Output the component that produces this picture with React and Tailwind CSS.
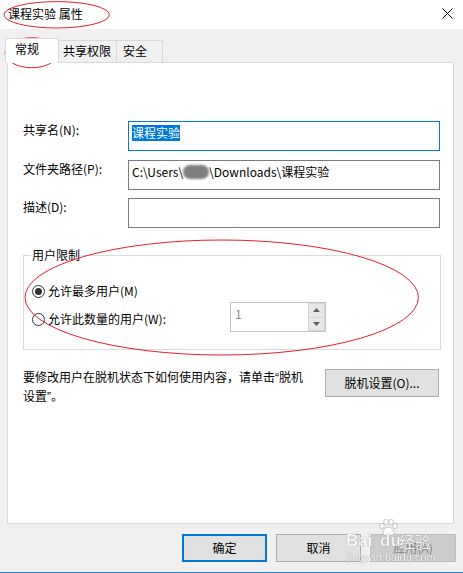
import React from 'react';

function Radio({ checked }) {
  return (
    <span className="w-[13px] h-[13px] rounded-full border border-[#333] bg-white flex items-center justify-center shrink-0">
      {checked && <span className="w-[7px] h-[7px] rounded-full bg-[#333]" />}
    </span>
  );
}

function Tri({ down }) {
  return (
    <svg width="7" height="4" viewBox="0 0 7 4">
      <path d={down ? 'M0 0H7L3.5 4Z' : 'M0 4H7L3.5 0Z'} fill="#606060" />
    </svg>
  );
}

export default function App() {
  return (
    <div className="relative w-[463px] h-[573px] overflow-hidden bg-[#f0f0f0] flex flex-col border-b border-[#1883d7] font-['Noto_Sans_CJK_SC',sans-serif] text-[12px] text-black">
      {/* title bar */}
      <div className="h-[29px] shrink-0 bg-white flex items-center justify-between pl-[8px] pr-[10px] pb-[2px]">
        <span className="leading-[16px]">课程实验 属性</span>
        <svg width="11" height="11" viewBox="0 0 11 11">
          <path d="M0.5 0.5L10.5 10.5M10.5 0.5L0.5 10.5" stroke="#111" strokeWidth="1" />
        </svg>
      </div>

      {/* tabs */}
      <div className="mt-[9px] h-[24px] pl-[5px] flex items-end">
        <div className="relative z-10 w-[54px] h-[25px] -mb-px bg-white border border-b-0 border-[#d9d9d9] pl-[9px] pt-[2px] leading-[16px]">
          常规
        </div>
        <div className="w-[58px] h-[22px] border-t border-r border-[#d9d9d9] pl-[4px] pt-[2px] leading-[16px]">
          共享权限
        </div>
        <div className="w-[46px] h-[22px] border-t border-r border-[#d9d9d9] pl-[6px] pt-[2px] leading-[16px]">
          安全
        </div>
      </div>

      {/* panel */}
      <div className="ml-[7px] w-[447px] h-[462px] bg-white border border-[#d9d9d9] pl-[15px] pt-[58px] flex flex-col">
        <div className="flex">
          <span className="w-[105px] leading-[16px] mt-[1px]">共享名(N):</span>
          <div className="w-[312px] h-[30px] border border-[#0078d7] px-[3px] pt-[3px] leading-[16px]">
            <span className="inline-block bg-[#0078d7] text-white leading-[16px]">课程实验</span>
          </div>
        </div>
        <div className="flex mt-[9px]">
          <span className="w-[105px] leading-[16px] mt-[1px]">文件夹路径(P):</span>
          <div className="w-[312px] h-[30px] border border-[#7a7a7a] px-[3px] pt-[3px] leading-[16px] whitespace-nowrap flex items-start">
            <span>C:\Users\</span>
            <span className="inline-block w-[26px] h-[14px] mt-[1px] rounded-full bg-[#7f7f7f] blur-[1px]" />
            <span>\Downloads\课程实验</span>
          </div>
        </div>
        <div className="flex mt-[8px]">
          <span className="w-[105px] leading-[16px] mt-[1px]">描述(D):</span>
          <div className="w-[312px] h-[30px] border border-[#7a7a7a]" />
        </div>

        <fieldset className="mt-[19px] w-[418px] border border-[#dcdcdc]">
          <legend className="ml-[7px] px-[1px] leading-[16px]">用户限制</legend>
          <div className="mt-[20px] h-[16px] pl-[8px] flex items-center gap-[3px] leading-[16px]">
            <Radio checked />
            <span>允许最多用户(M)</span>
          </div>
          <div className="mt-[3px] mb-[17px] pl-[8px] flex items-start">
            <div className="w-[198px] h-[16px] mt-[9px] flex items-center gap-[3px] leading-[16px]">
              <Radio />
              <span>允许此数量的用户(W):</span>
            </div>
            <div className="w-[96px] h-[30px] border border-[#c4c4c4] flex">
              <span className="flex-1 pl-[4px] pt-[3px] leading-[16px] text-[#8a8a8a]">1</span>
              <div className="w-[17px] bg-[#d6d6d6] p-[1px] flex flex-col gap-[1px]">
                <div className="flex-1 bg-[#e8e8e8] flex items-center justify-center">
                  <Tri />
                </div>
                <div className="flex-1 bg-[#e8e8e8] flex items-center justify-center">
                  <Tri down />
                </div>
              </div>
            </div>
          </div>
        </fieldset>

        <div className="mt-[18px] flex items-start">
          <p className="w-[302px] leading-[17px] whitespace-nowrap">
            要修改用户在脱机状态下如何使用内容，请单击<span className="font-['Liberation_Sans',sans-serif]">“</span>脱机
            <br />
            设置<span className="font-['Liberation_Sans',sans-serif]">”</span>。
          </p>
          <div className="w-[114px] h-[28px] mt-[1px] bg-[#e1e1e1] border border-[#adadad] flex items-center justify-center">
            脱机设置(O)...
          </div>
        </div>
      </div>

      {/* dialog buttons */}
      <div className="mt-[10px] pr-[7px] flex justify-end gap-[9px]">
        <div className="w-[85px] h-[28px] bg-[#e1e1e1] border-2 border-[#0078d7] flex items-center justify-center">确定</div>
        <div className="w-[85px] h-[28px] bg-[#e1e1e1] border border-[#adadad] flex items-center justify-center">取消</div>
        <div className="w-[86px] h-[28px] bg-[#cccccc] border border-[#bfbfbf] text-[#838383] flex items-center justify-center">应用(A)</div>
      </div>

      {/* baidu watermark */}
      <div className="absolute left-[345px] top-[518px] w-[100px] h-[48px] pointer-events-none opacity-80 text-white [text-shadow:0_0_1px_#8a8a8a,0_0_1px_#8a8a8a]">
        <svg className="absolute left-[33px] top-[1px]" width="20" height="18" viewBox="0 0 20 18">
          <g fill="#fff" stroke="#aaa" strokeWidth="0.8">
            <ellipse cx="4" cy="7" rx="2.3" ry="2.8" />
            <ellipse cx="8" cy="3" rx="2.3" ry="2.8" />
            <ellipse cx="13" cy="3" rx="2.3" ry="2.8" />
            <ellipse cx="17" cy="7" rx="2.3" ry="2.8" />
            <path d="M10.5 8C7 8 5 12 5 14.5C5 17 8 17 10.5 16.5C13 17 16 17 16 14.5C16 12 14 8 10.5 8Z" />
          </g>
        </svg>
        <span className="absolute left-[1px] top-[13px] text-[17px] font-bold leading-[20px] font-['Liberation_Sans',sans-serif]">Bai</span>
        <span className="absolute left-[35px] top-[13px] text-[17px] font-bold leading-[20px] font-['Liberation_Sans',sans-serif]">du</span>
        <span className="absolute left-[54px] top-[13px] text-[16px] leading-[20px]">经验</span>
        <span className="absolute left-[2px] top-[33px] text-[11px] leading-[12px] font-['Liberation_Sans',sans-serif]">jingyan.baidu.com</span>
      </div>

      {/* red annotation ellipses */}
      <svg className="absolute left-0 top-0 pointer-events-none" width="463" height="573" viewBox="0 0 463 573">
        <g fill="none" stroke="#e3202e" strokeWidth="1">
          <ellipse cx="56.7" cy="14.8" rx="52.7" ry="13.2" />
          <ellipse cx="31.7" cy="52.7" rx="26.7" ry="15" />
          <ellipse cx="221.7" cy="297.5" rx="196.7" ry="57.5" />
        </g>
      </svg>
    </div>
  );
}
